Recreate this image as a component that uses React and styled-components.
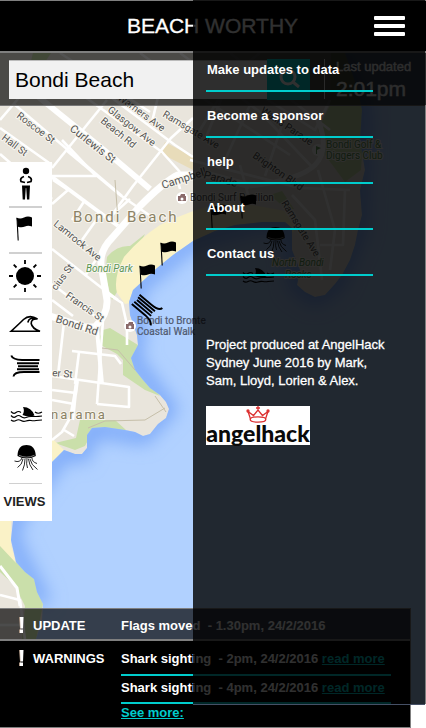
import React, { useState } from 'react';
import styled, { createGlobalStyle, css } from 'styled-components';

const GlobalStyle = createGlobalStyle`
  *, *::before, *::after { box-sizing: border-box; }
  body {
    margin: 0;
    background: #fff;
    font-family: "Liberation Sans", Arial, sans-serif;
    font-size: 13px;
    line-height: 18px;
  }
  button { font: inherit; border: 0; padding: 0; cursor: pointer; }
`;

const teal = '#00cccc';
const line = '#7f7f7f';

const Page = styled.div`
  position: relative;
  display: flex;
  flex-direction: column;
  min-height: 100vh;
  overflow: hidden;
`;

const MapLayer = styled.div`
  position: absolute;
  inset: 0 0 24px 0;
  z-index: -1;
  border-right: 1px solid ${line};
  svg { display: block; width: 100%; height: 100%; }
`;

const Header = styled.header`
  display: grid;
  grid-template-columns: 1fr auto 1fr;
  align-items: center;
  height: 53px;
  padding: 0 21px 0 20px;
  background: #000;
  border-top: 1px solid ${line};
  border-bottom: 2px solid ${line};
`;

const Title = styled.h1`
  grid-column: 2;
  margin: 0;
  color: #fff;
  font-size: 21px;
  font-weight: 400;
  line-height: 26px;
  -webkit-text-stroke: 0.3px #fff;
`;

const MenuButton = styled.button`
  z-index: 3;
  justify-self: end;
  display: grid;
  gap: 4px;
  width: 31px;
  background: none;
  span { height: 4px; border-radius: 1px; background: #fff; }
`;

const SearchBar = styled.form`
  display: flex;
  align-items: center;
  height: 53px;
  padding: 0 13px 0 9px;
  background: rgba(0, 0, 0, 0.68);
  border-bottom: 1px solid #777;
`;

const SearchInput = styled.input`
  flex: 1;
  min-width: 0;
  height: 39px;
  padding: 0 6px;
  border: 0;
  border-top: 1px solid #bbb;
  border-radius: 0;
  background: #f1f1f1;
  color: #000;
  font: 21px "Liberation Sans", Arial, sans-serif;
`;

const SearchButton = styled.button`
  display: grid;
  place-items: center;
  width: 43px;
  height: 41px;
  background: ${teal};
`;

const Updated = styled.div`
  width: 89px;
  height: 40px;
  margin-left: 14px;
  padding-left: 11px;
  border-left: 1px solid #ddd;
  color: #eee;
  white-space: nowrap;
  -webkit-text-stroke: 0.4px #eee;
  span { display: block; line-height: 16px; }
  strong { display: block; font-size: 21px; font-weight: 400; line-height: 28px; }
`;

const Stage = styled.main`
  flex: 1;
  padding: 56px 0 48px;
`;

const Toolbar = styled.nav`
  width: 52px;
  height: 359px;
  background: #fff;
`;

const Tool = styled.button`
  display: block;
  width: 33px;
  height: 46px;
  margin-left: 9px;
  background: none;
  border-bottom: ${(p) => (p.$thin ? 1 : 2)}px solid #d0d0d0;
  svg { display: block; width: 34px; height: 44px; overflow: visible; }
`;

const Views = styled.button`
  width: 49px;
  height: 35px;
  background: none;
  color: #222;
  font-weight: 700;
  white-space: nowrap;
`;

const Alerts = styled.section`
  margin-right: 15px;
  color: #fff;
  font-weight: 700;
  border: 1px solid ${line};
  border-left: 0;
`;

const AlertGroup = styled.div`
  display: grid;
  grid-template-columns: 15px 88px 1fr;
  padding-left: 18px;
  ${(p) =>
    p.$solid
      ? css`
          background: #000;
          min-height: 86px;
          padding-top: 9px;
        `
      : css`
          background: rgba(0, 0, 0, 0.7);
          border-bottom: 2px solid ${line};
          padding: 8px 0 4px 18px;
        `}
  svg { display: block; width: 6px; height: 17px; }
  h2 { margin: 0; font-size: inherit; }
`;

const AlertList = styled.ul`
  margin: 0 19px 0 0;
  padding: 0;
  list-style: none;
  white-space: pre;
`;

const Warning = styled.li`
  height: ${(p) => (p.$first ? 26 : 28)}px;
  padding-top: ${(p) => (p.$first ? 0 : 3)}px;
  border-bottom: 2px solid ${teal};
`;

const TealLink = styled.a`
  color: ${teal};
  text-decoration: underline;
`;

const Drawer = styled.aside`
  position: absolute;
  z-index: 2;
  top: 0;
  right: 1px;
  bottom: 23px;
  width: 232px;
  padding: 46px 13px 0;
  background: rgba(0, 0, 0, 0.81);
  border-bottom: 1px solid #465066;
  color: #fff;
`;

const MenuList = styled.ul`
  width: 167px;
  margin: 0 0 60px;
  padding: 0;
  list-style: none;
`;

const MenuItem = styled.li`
  height: 46px;
  padding: 15px 1px 11px;
  border-bottom: 2px solid ${teal};
  a { color: #fff; font-weight: 700; text-decoration: none; }
`;

const Credit = styled.p`
  max-width: 188px;
  margin: 0 0 16px;
  -webkit-text-stroke: 0.3px #fff;
`;

const Logo = styled.div`
  display: flex;
  flex-direction: column;
  align-items: center;
  width: 104px;
  height: 39px;
  background: #fff;
  color: #0a0a0a;
  font: 900 23px/20px Lato, sans-serif;
  svg { display: block; flex: none; width: 24px; height: 17px; }
`;

const Person = () => (
  <g>
    <circle cx="17" cy="9" r="3.2" />
    <path d="M15 14.500Q10.500 16 12 19.500L16 20.500M19 14.500Q23.500 16 22 19.500L18 20.500" fill="none" stroke="#000" strokeWidth="1.800" />
    <path d="M13 23.500H21L20.300 37.500H18L17.200 26H16.800L16 37.500H13.700Z" />
  </g>
);

const Flag = () => (
  <g>
    <path d="M7.500 9.500Q11 11.500 15 9.500T23 9.500V18.500Q19 17 16 18.500T9 18.800Z" />
    <path d="M8 10L9.200 32.500" stroke="#000" strokeWidth="1.100" />
  </g>
);

const Sun = () => (
  <g>
    <circle cx="16" cy="22" r="9" />
    <path d="M16 6v4M16 34v4M0 22h4M28 22h4M4.700 10.700l2.800 2.800M24.500 30.500l2.800 2.800M27.300 10.700l-2.800 2.800M7.500 30.500l-2.800 2.800" stroke="#000" strokeWidth="1.800" />
  </g>
);

const Wave = () => (
  <path d="M2 30.300Q10 23 14.500 18.500Q20.500 13 28.500 18Q22 17.500 22.200 22.500Q23 27.500 31 30.300ZM28 17.800Q20 15.500 18.800 21.500" fill="none" stroke="#000" strokeWidth="1.600" />
);

const Wind = () => (
  <path d="M2.300 8.500Q3.500 12.500 13 13H30.500M8 16.300H30M9 19.300H29M8 22.200H30M30.500 25H15Q5 25 4.500 29.500" fill="none" stroke="#000" strokeWidth="1.900" />
);

const Shark = () => (
  <g>
    <path d="M13.500 22Q16 18 14 14Q22.500 14 25.500 22.500Q19 24.500 13.500 22Z" />
    <path d="M2 18.500q2.500 3 5 1t5 0M26 19q3 2.500 7 0M2 22.500q2.500 3 5 1t5 0 5 1 5-1 5 0 6-.500M2 27q2.500 2 5 .500t5 0 5 .500 5-.500 5 0 6-.500" fill="none" stroke="#000" strokeWidth="1.200" />
  </g>
);

const Jelly = () => (
  <g>
    <path d="M8.500 17C8.500 9 12.500 6 17.500 6S26.500 9 26.800 17Q17.500 22 8.500 17Z" />
    <path d="M10 16.300Q17.500 20 25.500 16.300" fill="none" stroke="#fff" strokeWidth=".5" />
    <path d="M13 19Q11 24 5.500 22M14 20Q13 26 8.500 28.500M16 20Q16 26 13.500 31.500M18 20Q17 25 18.500 29M19.500 20Q20 26 24 31M21 20Q22 26 28.500 30.500M23 19Q23 23 28 24.500" fill="none" stroke="#111" strokeWidth=".9" />
  </g>
);

const tools = [
  ['Lifeguards', Person],
  ['Flags', Flag],
  ['Weather', Sun],
  ['Surf', Wave],
  ['Wind', Wind],
  ['Sharks', Shark],
  ['Jellyfish', Jelly],
];

const Exclamation = () => (
  <svg viewBox="0 0 6 17" aria-hidden="true">
    <path d="M1 0H3V11.500H2ZM1 12.500H3V16H1Z" fill="#b09a88" />
    <path d="M2 0H5.500L5 11.500H2.500ZM2 12.500H5V16H2Z" fill="#fff" />
  </svg>
);

const minorRoads = [
  'M0 120L24 92L38 72', 'M107 100L52 168', 'M0 128L52 165', 'M66 150L120 195L152 217',
  'M14 104L122 196', 'M85 97L162 152L180 172', 'M112 98L175 145L193 157', 'M158 97L152 122',
  'M193 118L171 138L133 186L112 215', 'M52 176H96L62 140', 'M52 204L68 190L53 180',
  'M85 200L72 220M102 212L82 240M130 199L112 215', 'M52 249L98 285L118 300',
  'M100 254L85 276', 'M52 284L100 320', 'M52 300L73 316', 'M64 322L58 375',
  'M72 351L115 356L121 364M79 352L75 384', 'M52 376L129 387V407L97 404M52 390L76 393M52 400L74 404',
  'M103 320L97 404', 'M52 440L62 432L70 418L77 381L73 420', 'M64 430L74 436',
  'M105 292L122 303L127 325V345', 'M176 174L180 189', 'M0 154L52 199',
  'M60 53L150 112', 'M140 53L193 92L290 155', 'M180 53L260 112L313 168', 'M200 130L235 72L260 53',
  'M190 160L300 188L350 190', 'M225 90L205 140', 'M250 105L225 160', 'M282 125L265 176',
  'M318 170L335 230L330 270', 'M345 190L343 245H320', 'M292 195L315 220L322 280', 'M240 165L250 202',
  'M260 95L315 130L330 100', 'M230 53L330 130', 'M0 595L20 600L25 640', 'M0 625L22 625',
];

const labels = [
  ['Roscoe St', 16, 117, 37, 10], ['Hall St', 1, 139, 37, 10], ['Curlewis St', 69, 130, 38, 11],
  ['Glasgow Ave', 107, 111, 38, 10], ['Beach Rd', 100, 122, 39, 10], ['Warners Ave', 117, 99, 36, 10],
  ['Ramsgate Ave', 162, 116, 31, 10], ['Lamrock Ave', 53, 225, 39, 10], ['Francis St', 65, 297, 35, 10],
  ['Bondi Rd', 55, 322, 18, 11], ['er St', 52, 376, 5, 10], ['cius St', 56, 291, -53, 10],
  ['Campbell', 163, 189, -18, 11], ['Parade', 203, 178, 15, 11],
  ['Brighton Blvd', 252, 157, 35, 10], ['Ramsgate Ave', 281, 203, 58, 10],
  ['Wallis Parade', 260, 112, 34, 10],
];

const CityMap = () => (
  <svg viewBox="0 0 426 704" preserveAspectRatio="xMinYMin slice" aria-label="Map of Bondi Beach" role="img">
    <defs>
      <filter id="shore" x="-20%" y="-20%" width="140%" height="140%">
        <feGaussianBlur stdDeviation="9" />
      </filter>
      <clipPath id="sea">
        <path d="M426 0H340L345 53L358 90L362 110L360 140L365 170L360 190L362 215L358 230L355 245L350 260L342 275L335 284L325 295L315 297L305 292L297 285L300 270L292 250V228L285 222H262L235 225L215 231L193 241L173 255L157 268L133 290L129 302L130 315L137 335L138 345L131 358L135 370L143 380L150 388L160 395L166 402L169 409L166 418L158 424L150 434L143 436L135 432L125 430L105 427L92 428L87 435L87 448L82 454L75 454L64 450L52 462L13 521L11 540L16 562L25 572L34 579L37 592L43 604L42 620L34 645L38 704H426Z" />
      </clipPath>
    </defs>
    <rect width="426" height="704" fill="#e9e5dc" />
    <path d="M165 142L193 157V170L160 153Z" fill="#e8dcba" />
    <g fill="#cadfaa">
      <path d="M107 257Q117 245 130 246L145 234L117 292L112 300L105 275Z" />
      <path d="M97 343L103 330L110 328L138 345V356L148 382L160 396L145 390L123 375V360L117 354Z" />
      <path d="M55 443L76 438L80 420H115L126 430L92 432L85 446L75 450Z" />
      <path d="M331 53H352L365 110L361 170L345 182L325 155L318 130L330 105Z" />
      <path d="M0 545L16 562L34 578L43 604L36 640H22L25 606L15 586L0 572Z" />
      <path d="M33 53h18l-8 12H30ZM270 195l12-4 12 18h-8Z" />
    </g>
    <g fill="#faf2c7">
      <path d="M294 213Q250 203 223 203Q193 209 160 225Q140 238 124 257Q113 278 117 293L125 304L145 300L200 250L294 232Z" />
      <path d="M52 438L64 450L50 464L30 500L11 522V545L16 563L0 546V500Z" />
    </g>
    <g fill="none" stroke="#fff" strokeWidth="2.600" strokeLinejoin="round">
      {minorRoads.map((d) => <path key={d} d={d} />)}
    </g>
    <g fill="none" stroke="#fff" strokeWidth="7" strokeLinejoin="round">
      <path d="M30 90L72 124L110 155L150 189" strokeWidth="6" />
      <path d="M250 186L210 175H178Q165 181 140 206L112 238Q100 250 101 264L107 300Q108 314 95 327H85L50 316" />
      <path d="M52 177L118 226" strokeWidth="4" />
      <path d="M97 330L102 384M75 395L77 381" strokeWidth="4" />
      <path d="M0 566L17 588L20 606" strokeWidth="3" />
      <path d="M250 186Q300 180 315 165T318 120" strokeWidth="5" />
    </g>
    <g clipPath="url(#sea)">
      <rect width="426" height="704" fill="#b1d1ff" />
      <path d="M340 53L362 110L360 190L358 230L335 284L315 297L297 285L292 228L262 222L193 241L133 290L137 335L131 358L168 409L143 436L92 428L82 454L64 450L13 521L11 540L43 604" fill="none" stroke="#78a6f8" strokeWidth="16" filter="url(#shore)" />
    </g>
    <path d="M102 348L118 350L135 370M88 428L105 421L145 420L165 408M155 396L166 412M115 180L118 220" fill="none" stroke="#c6bfa9" />
    <g fontFamily="Roboto, sans-serif" fill="#555" stroke="#f8f5ee" strokeWidth="2" paintOrder="stroke">
      {labels.map(([text, x, y, angle, size]) => (
        <text key={`${text}-${x}`} transform={`translate(${x} ${y}) rotate(${angle})`} fontSize={size}>{text}</text>
      ))}
      <g fill="#8b8265" fontSize="15" letterSpacing="2">
        <text x="73" y="222">Bondi Beach</text>
        <text x="51" y="419" fontSize="13">narama</text>
      </g>
      <g fill="#5b9653" fontSize="10">
        <text x="86" y="272" fontSize="10" fontStyle="italic">Bondi Park</text>
        <text x="326" y="148">Bondi Golf &amp;</text>
        <text x="326" y="159">Diggers Club</text>
        <text x="272" y="266" fontStyle="italic">North Bondi</text>
        <text x="285" y="278" fontStyle="italic">Rocks</text>
      </g>
      <text x="190" y="201" fontSize="10">Bondi Surf Pavilion</text>
    </g>
    <g fill="#505a70" fontFamily="Roboto, sans-serif" fontSize="10" stroke="#505a70" strokeWidth=".2">
      <text x="137" y="324">Bondi to Bronte</text>
      <text x="137" y="335">Coastal Walk</text>
    </g>
    {[[182, 198], [130, 326]].map(([x, y]) => (
      <g key={x} transform={`translate(${x} ${y})`}>
        <circle r="6" fill="#fff" />
        <path d="M-4-2h2l1-2h4v2h1v5h-8Z" fill="#8a6a6a" />
        <circle cy="1" r="1.500" fill="#fff" />
      </g>
    ))}
    <g transform="translate(318 150)"><circle r="6" fill="#fff" /><path d="M-2 4V-4L3-2L-1 0V4Z" fill="#6da15f" /></g>
    <g transform="translate(153 233)"><Flag /></g>
    <g transform="translate(132 256)"><Flag /></g>
    <g transform="translate(233 186)"><Flag /></g>
    <g transform="translate(203 196)"><Flag /></g>
    <g transform="translate(146 308) rotate(220) translate(-17 -19)"><Wind /></g>
    <g transform="translate(258 221)"><Jelly /></g>
    <g transform="translate(241 254)"><Shark /></g>
  </svg>
);

const menu = ['Make updates to data', 'Become a sponsor', 'help', 'About', 'Contact us'];

export default function App() {
  const [open, setOpen] = useState(true);
  const [beach, setBeach] = useState('Bondi Beach');

  return (
    <>
      <GlobalStyle />
      <Page>
        <MapLayer><CityMap /></MapLayer>
        <Header>
          <Title>BEACH WORTHY</Title>
          <MenuButton type="button" aria-label="Menu" aria-expanded={open} onClick={() => setOpen(!open)}>
            <span /><span /><span />
          </MenuButton>
        </Header>
        <SearchBar onSubmit={(e) => e.preventDefault()}>
          <SearchInput aria-label="Beach" value={beach} onChange={(e) => setBeach(e.target.value)} />
          <SearchButton type="submit" aria-label="Search">
            <svg width="22" height="22" viewBox="0 0 22 22" fill="none" stroke="#fff" strokeWidth="3">
              <circle cx="10" cy="9" r="7" /><path d="M15 14l6 5" />
            </svg>
          </SearchButton>
          <Updated><span>Last updated</span><strong>2:01pm</strong></Updated>
        </SearchBar>
        <Stage>
          <Toolbar aria-label="Map views">
            {tools.map(([name, Icon], i) => (
              <Tool key={name} type="button" aria-label={name} $thin={i > 2}>
                <svg viewBox="0 0 34 44"><Icon /></svg>
              </Tool>
            ))}
            <Views type="button">VIEWS</Views>
          </Toolbar>
        </Stage>
        <Alerts>
          <AlertGroup>
            <Exclamation />
            <h2>UPDATE</h2>
            <AlertList><li>{'Flags moved  - 1.30pm, 24/2/2016'}</li></AlertList>
          </AlertGroup>
          <AlertGroup $solid>
            <Exclamation />
            <h2>WARNINGS</h2>
            <AlertList>
              <Warning $first>{'Shark sighting  - 2pm, 24/2/2016 '}<TealLink href="#shark-2pm">read more</TealLink></Warning>
              <Warning>{'Shark sighting  - 4pm, 24/2/2016 '}<TealLink href="#shark-4pm">read more</TealLink></Warning>
              <li><TealLink href="#warnings">See more:</TealLink></li>
            </AlertList>
          </AlertGroup>
        </Alerts>
        {open && (
          <Drawer>
            <MenuList>
              {menu.map((item) => (
                <MenuItem key={item}><a href={`#${item.toLowerCase().replace(/ /g, '-')}`}>{item}</a></MenuItem>
              ))}
            </MenuList>
            <Credit>Project produced at AngelHack Sydney June 2016 by Mark, Sam, Lloyd, Lorien &amp; Alex.</Credit>
            <Logo>
              <svg viewBox="0 0 24 17" fill="none" stroke="#dc3030" strokeWidth="1.300" aria-hidden="true">
                <path d="M4.500 13L2 5.500L7.500 9.500L12 4L16.500 9.500L22 5.500L19.500 13M12 0V5M10 2H14" />
                <ellipse cx="12" cy="13.500" rx="7.800" ry="2.600" />
                <circle cx="2" cy="5" r="1" /><circle cx="22" cy="5" r="1" />
              </svg>
              angelhack
            </Logo>
          </Drawer>
        )}
      </Page>
    </>
  );
}
